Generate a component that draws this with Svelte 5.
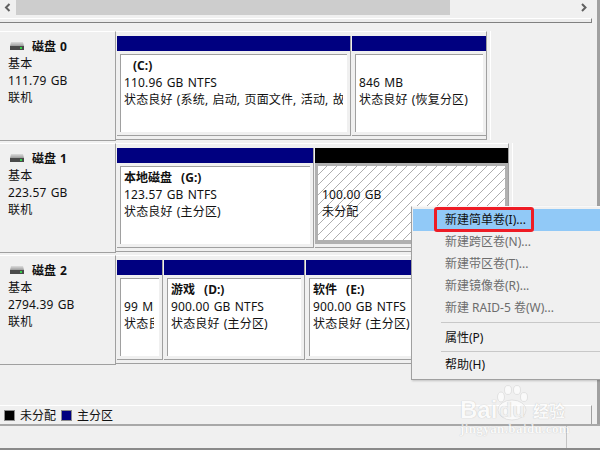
<script>
  const rows = [
    { name: '磁盘 0', kind: '基本', size: '111.79 GB', state: '联机', parts: [
      { w: 'p233', t: '(C:)', indent: true, l1: '110.96 GB NTFS', l2: '状态良好 (系统, 启动, 页面文件, 活动, 故障转储, 主分区)' },
      { w: 'p135', t: '', l1: '846 MB', l2: '状态良好 (恢复分区)' } ] },
    { name: '磁盘 1', kind: '基本', size: '223.57 GB', state: '联机', parts: [
      { w: 'p196', t: '本地磁盘 (G:)', l1: '123.57 GB NTFS', l2: '状态良好 (主分区)' },
      { w: 'p193', t: '', l1: '100.00 GB', l2: '未分配', free: true } ] },
    { name: '磁盘 2', kind: '基本', size: '2794.39 GB', state: '联机', parts: [
      { w: 'p45', t: '', l1: '99 MB', l2: '状态良好 (EFI 系统分区)' },
      { w: 'p140', t: '游戏 (D:)', l1: '900.00 GB NTFS', l2: '状态良好 (主分区)' },
      { w: 'p140', t: '软件 (E:)', l1: '900.00 GB NTFS', l2: '状态良好 (主分区)' } ] }
  ];
  const menu = [
    { t: '新建简单卷(I)...', hot: true },
    { t: '新建跨区卷(N)...', off: true },
    { t: '新建带区卷(T)...', off: true },
    { t: '新建镜像卷(R)...', off: true },
    { t: '新建 RAID-5 卷(W)...', off: true },
    { sep: true },
    { t: '属性(P)' },
    { sep: true, short: true },
    { t: '帮助(H)' }
  ];
</script>

<div class="page">
  <div class="main">
    <div class="hscroll">
      <svg class="arrow" width="16" height="15" viewBox="0 0 16 15"><path d="M9.5 4 L6 7.5 L9.5 11" fill="none" stroke="#606060" stroke-width="2"/></svg>
      <div class="thumb"></div>
      <svg class="arrow end" width="16" height="15" viewBox="0 0 16 15"><path d="M6 4 L9.5 7.5 L6 11" fill="none" stroke="#606060" stroke-width="2"/></svg>
    </div>
    <div class="hrule"></div>

    <div class="rows">
      {#each rows as r}
        <div class="row">
          <div class="label">
            <div class="title">
              <svg class="disk" width="14" height="8" viewBox="0 0 14 8">
                <defs>
                  <linearGradient id="diskTop" x1="0" y1="0" x2="0" y2="1">
                    <stop offset="0" stop-color="#dcdcdc"/>
                    <stop offset="1" stop-color="#9c9c9c"/>
                  </linearGradient>
                </defs>
                <path d="M1 0 H13 L14 4 H0 Z" fill="url(#diskTop)"/>
                <rect x="0" y="4" width="14" height="4" fill="#4a4a4a"/>
                <rect x="10" y="5" width="2" height="2" fill="#35d04a"/>
              </svg>
              <b>{r.name}</b>
            </div>
            <div class="wide">{r.kind}</div>
            <div class="wide">{r.size}</div>
            <div class="wide">{r.state}</div>
          </div>
          <div class="group">
            {#each r.parts as p}
              <div class="part {p.w}" class:free={p.free}>
                <div class="bar"></div>
                <div class="body">
                  <div class="line strong" class:indent={p.indent}>{p.t}</div>
                  <div class="line">{p.l1}</div>
                  <div class="line">{p.l2}</div>
                </div>
              </div>
            {/each}
          </div>
        </div>
      {/each}
    </div>

    <div class="legend-wrap">
      <div class="legend">
        <span class="swatch black"></span><span>未分配</span>
        <span class="swatch navy"></span><span>主分区</span>
      </div>
    </div>
  </div>

  <div class="status">
    <div class="status-end"></div>
  </div>

  <div class="menu">
    {#each menu as m}
      {#if m.sep}
        <div class="sep" class:short={m.short}></div>
      {:else}
        <div class="item" class:hot={m.hot} class:off={m.off}>{m.t}</div>
      {/if}
    {/each}
  </div>
  <div class="redbox"></div>

  <div class="mark">
    <svg class="paw" width="34" height="36" viewBox="0 0 34 36">
      <g fill="#fff" stroke="#d4d4d4" stroke-width="0.8">
        <ellipse cx="5" cy="12" rx="3.500" ry="5"/>
        <ellipse cx="12" cy="5" rx="3.500" ry="4.500"/>
        <ellipse cx="21" cy="5" rx="3.500" ry="4.500"/>
        <ellipse cx="28" cy="12" rx="3.500" ry="4.500"/>
        <ellipse cx="16" cy="25" rx="14" ry="10"/>
      </g>
    </svg>
    <div class="mark-main"><span>Bai</span><span class="du">du</span><span class="jy">经验</span></div>
    <div class="mark-sub">jingyan.baidu.com</div>
  </div>
</div>

<style>
  :global(body) { margin: 0; }
  .page {
    position: relative;
    width: 600px;
    height: 450px;
    overflow: hidden;
    background: #f0f0f0;
    color: #111;
    font: 12px/17px "Noto Sans", "Noto Sans CJK SC", sans-serif;
  }
  .main {
    height: 424px;
    box-sizing: border-box;
    border-right: 3px solid #a0a0a0;
    display: flex;
    flex-direction: column;
  }
  .hscroll { display: flex; height: 15px; margin-right: 5px; flex: none; }
  .arrow { flex: none; }
  .arrow.end { margin-left: auto; }
  .thumb { width: 434px; background: #cdcdcd; }
  .hrule {
    flex: none;
    height: 4px;
    margin-top: 3px;
    margin-right: 5px;
    margin-bottom: 9px;
    box-sizing: border-box;
    border-top: 1px solid #fff;
    border-right: 1px solid #808080;
    background: #ececec;
    box-shadow: 0 1px 0 #808080;
  }
  .rows { flex: none; }
  .row { display: flex; height: 112px; align-items: flex-start; }
  .label {
    width: 116px;
    height: 110px;
    flex: none;
    box-sizing: border-box;
    border-top: 1px solid #fff;
    border-right: 1px solid #a0a0a0;
    border-bottom: 1px solid #a0a0a0;
    padding: 6px 0 0 8px;
  }
  .wide { letter-spacing: .15px; word-spacing: 1px; }
  .title { display: flex; align-items: center; height: 17px; }
  .disk { margin: 0 8px 2px 2px; flex: none; }
  .title b { font-weight: 700; word-spacing: 1px; }
  .group {
    display: flex;
    gap: 2px;
    box-sizing: border-box;
    height: 109px;
    padding: 4px 0 3px 1px;
    border-top: 1px solid #fff;
    border-right: 1px solid #a0a0a0;
    border-bottom: 1px solid #a0a0a0;
    box-shadow: 3px 0 0 #f0f0f0, 4px 0 0 #fff;
    flex: none;
  }
  .part {
    position: relative;
    box-sizing: border-box;
    height: 100px;
    border-bottom: 1px solid #a0a0a0;
    padding-bottom: 3px;
    display: flex;
    flex-direction: column;
    background: #f0f0f0;
    box-shadow: 1px 0 0 #a0a0a0;
  }
  .p233 { width: 233px; }
  .p135 { width: 134px; }
  .p196 { width: 196px; }
  .p193 { width: 193px; }
  .p45 { width: 45px; }
  .p140 { width: 140px; }
  .bar { height: 15px; flex: none; background: #000080; }
  .body {
    flex: 1;
    min-height: 0;
    margin: 3px 3px 0 3px;
    padding: 2px 4px 0 3px;
    background: #fff;
    box-sizing: border-box;
    border-top: 1px solid #a0a0a0;
    border-left: 1px solid #a0a0a0;
  }
  .p45 .body { padding-right: 5px; }
  .line {
    height: 17px;
    overflow: hidden;
    white-space: nowrap;
    letter-spacing: .15px;
    word-spacing: 1px;
  }
  .strong { font-weight: 700; letter-spacing: 0; word-spacing: 6px; }
  .indent { padding-left: 9px; }
  .free .bar { background: #000; }
  .free .body {
    margin: 0;
    border: 3px solid #b0b0b0;
    border-bottom-width: 4px;
    padding: 3px 0 0 4px;
    background: repeating-linear-gradient(135deg, #fff 0 6.07px, #aeaeae 6.07px 7.07px);
  }
  .legend-wrap { margin-top: auto; }
  .legend {
    height: 19px;
    box-sizing: border-box;
    margin-right: 5px;
    border-top: 1px solid #fff;
    border-right: 1px solid #a0a0a0;
    display: flex;
    align-items: center;
    padding-left: 4px;
  }
  .swatch {
    width: 11px;
    height: 11px;
    box-sizing: border-box;
    margin-right: 5px;
    border: 1px solid #8c8c8c;
  }
  .swatch.black { background: #000; }
  .swatch.navy { background: #000080; margin-left: 5px; }
  .status {
    height: 26px;
    box-sizing: border-box;
    border-top: 2px solid #a8a8a8;
    border-bottom: 2px solid #8a8a8a;
    display: flex;
    justify-content: flex-end;
  }
  .status-end { width: 33px; border-left: 1px solid #c4c4c4; }
  .menu {
    position: absolute;
    left: 411px;
    top: 206px;
    width: 189px;
    height: 174px;
    box-sizing: border-box;
    padding: 2px 0 4px 1px;
    background: #f0f0f0;
    border-left: 1px solid #a0a0a0;
    border-bottom: 1px solid #a0a0a0;
    border-top: 1px solid #f8f8f8;
    box-shadow: 1px 1px 2px rgba(0,0,0,.2);
  }
  .item { height: 22px; line-height: 22px; padding-left: 32px; white-space: nowrap; }
  .item.hot { background: #91c9f7; }
  .item.off { color: #6d6d6d; }
  .sep { height: 8px; margin-left: 28px; position: relative; }
  .sep.short { height: 5px; }
  .sep::after { content: ""; position: absolute; left: 0; right: 0; top: 3px; border-top: 1px solid #c8c8c8; }
  .sep.short::after { top: 2px; }
  .redbox {
    position: absolute;
    left: 434px;
    top: 207px;
    width: 100px;
    height: 25px;
    box-sizing: border-box;
    border: 3px solid #ee1c25;
    border-radius: 3px;
  }
  .mark {
    position: absolute;
    left: 460px;
    top: 385px;
    width: 110px;
    height: 52px;
    color: #fff;
    opacity: .7;
    pointer-events: none;
  }
  .paw { position: absolute; left: 36px; top: 0; }
  .mark-main {
    position: absolute;
    left: 0;
    top: 12px;
    display: flex;
    align-items: center;
    font: 700 24px/26px "Liberation Sans", sans-serif;
    text-shadow: 0 0 1px rgba(0,0,0,.35);
  }
  .du { margin-left: 2px; font-size: 21px; color: #f0f0f0; }
  .jy { margin-left: 8px; font: 700 16px/26px "Noto Sans CJK SC", sans-serif; }
  .mark-sub {
    position: absolute;
    left: 0;
    top: 38px;
    font: 700 13px/12px "Liberation Serif", serif;
    letter-spacing: .4px;
    white-space: nowrap;
    text-shadow: 0 0 1px rgba(0,0,0,.3);
  }
</style>
